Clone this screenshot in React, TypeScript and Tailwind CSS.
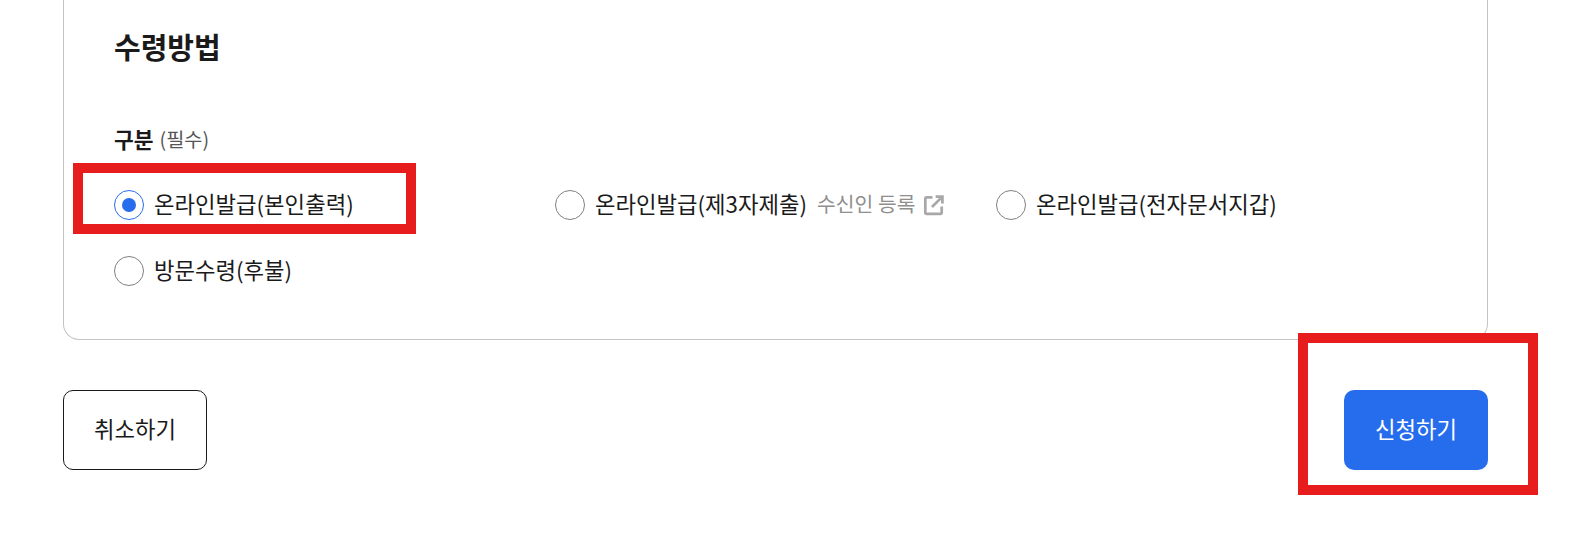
const font = { fontFamily: '"Noto Sans CJK KR", "Noto Sans", sans-serif' };

function Radio({ label, checked }: { label: string; checked?: boolean }) {
  return (
    <label className="flex items-center gap-[10px] text-[22.3px] leading-[26px] text-[#1a1a1a]">
      {checked ? (
        <span className="flex h-[30px] w-[30px] items-center justify-center rounded-full border border-[#266ded] bg-white">
          <span className="h-[14px] w-[14px] rounded-full bg-[#266ded]" />
        </span>
      ) : (
        <span className="h-[30px] w-[30px] rounded-full border border-[#808080] bg-white" />
      )}
      <span className="pb-[4px]">{label}</span>
    </label>
  );
}

export default function App() {
  return (
    <div className="relative h-[546px] w-[1587px] overflow-hidden bg-white" style={font}>
      <div className="ml-[63px] w-[1425px]">
        <section className="h-[340px] rounded-b-[16px] border border-t-0 border-[#c4c4c4] pl-[50px] pt-[25px]">
          <h2 className="text-[29px] font-bold leading-[42px] text-[#1a1a1a]">수령방법</h2>
          <div className="mt-[57px] flex h-[30px] items-center gap-[6px]">
            <span className="text-[21.5px] font-bold text-[#1a1a1a]">구분</span>
            <span className="text-[19.7px] text-[#555555]">(필수)</span>
          </div>
          <div className="mt-[36px] grid grid-cols-[441px_441px_441px] gap-y-[36px]">
            <Radio label="온라인발급(본인출력)" checked />
            <div className="flex items-center gap-[10px]">
              <Radio label="온라인발급(제3자제출)" />
              <span className="flex items-center gap-[8px] text-[20.4px] leading-[26px] text-[#8f8f8f]">
                <span className="pb-[4px]">수신인 등록</span>
                <svg width="21" height="21" viewBox="0 0 20 20" fill="none" stroke="#a8a8a8" strokeWidth="2.6">
                  <path d="M9 2.300H3.500A1.300 1.300 0 0 0 2.200 3.600v13a1.300 1.300 0 0 0 1.300 1.300h13a1.300 1.300 0 0 0 1.300-1.300V11" />
                  <path d="M12 1.500h6.500V8M18 2L8.500 11.500" />
                </svg>
              </span>
            </div>
            <Radio label="온라인발급(전자문서지갑)" />
            <Radio label="방문수령(후불)" />
          </div>
        </section>
        <div className="mt-[50px] flex justify-between">
          <button className="h-[80px] w-[144px] rounded-[10px] border border-[#1a1a1a] bg-white pb-[3px] text-[22.3px] text-[#1a1a1a]">
            취소하기
          </button>
          <button className="h-[80px] w-[144px] rounded-[10px] bg-[#266ded] pb-[3px] text-[22.3px] text-white">
            신청하기
          </button>
        </div>
      </div>
      {/* annotation boxes */}
      <div className="absolute left-[73px] top-[163px] h-[71px] w-[343px] border-[10px] border-[#e71d1d]" />
      <div className="absolute left-[1298px] top-[333px] h-[162px] w-[240px] border-[10px] border-[#e71d1d]" />
    </div>
  );
}
